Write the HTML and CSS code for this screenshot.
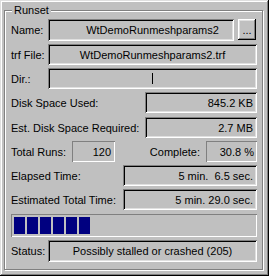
FILE: index.html
```html
<!DOCTYPE html>
<html>
<head>
<meta charset="utf-8">
<link rel="stylesheet" href="styles.css">
</head>
<body>
<div class="window">
  <div class="group">
    <div class="legend">Runset</div>
    <div class="rows">
      <div class="row h22">
        <span class="lbl w37">Name:</span>
        <div class="sunken center name">WtDemoRunmeshparams2</div>
        <div class="btn">...</div>
      </div>
      <div class="row">
        <span class="lbl w37">trf File:</span>
        <div class="sunken center">WtDemoRunmeshparams2.trf</div>
      </div>
      <div class="row">
        <span class="lbl w37">Dir.:</span>
        <div class="sunken center"><span class="caret"></span></div>
      </div>
      <div class="row">
        <span class="lbl w134">Disk Space Used:</span>
        <div class="sunken right">845.2 KB</div>
      </div>
      <div class="row mt1">
        <span class="lbl w134">Est. Disk Space Required:</span>
        <div class="sunken right">2.7 MB</div>
      </div>
      <div class="row">
        <span class="lbl w61">Total Runs:</span>
        <div class="static right runs">120</div>
        <span class="lbl complete">Complete:</span>
        <div class="static right pct">30.8 %</div>
      </div>
      <div class="row">
        <span class="lbl w112">Elapsed Time:</span>
        <div class="sunken right">5 min.  6.5 sec.</div>
      </div>
      <div class="row">
        <span class="lbl w112">Estimated Total Time:</span>
        <div class="sunken right">5 min. 29.0 sec.</div>
      </div>
      <div class="row h23 progress mt1">
        <span class="block"></span><span class="block"></span><span class="block"></span><span class="block"></span><span class="block"></span><span class="block"></span>
      </div>
      <div class="row h22">
        <span class="lbl w37">Status:</span>
        <div class="sunken center">Possibly stalled or crashed (205)</div>
      </div>
    </div>
  </div>
</div>
</body>
</html>
```
FILE: styles.css
```css
* { box-sizing: border-box; }
html, body { margin: 0; padding: 0; }
body {
  background: #c0c0c0;
  font-family: "Liberation Sans", Arial, sans-serif;
  font-size: 11px;
  color: #000;
}
.window {
  width: 269px;
  height: 276px;
  background: #c0c0c0;
  padding: 10px 0 0 4px;
  box-shadow: inset -1px -1px #000, inset 1px 1px #dfdfdf, inset -2px -2px #808080, inset 2px 2px #fff;
}
.group {
  position: relative;
  width: 259px;
  height: 260px;
  border: 1px solid #808080;
  box-shadow: inset 1px 1px #fff, 1px 1px #fff;
  padding: 8px 5px 0 6px;
}
.legend {
  position: absolute;
  left: 7px;
  top: -8px;
  padding: 0 2px;
  background: #c0c0c0;
  line-height: 14px;
  font-size: 11px;
}
.rows {
  display: flex;
  flex-direction: column;
  gap: 3px;
}
.row {
  display: flex;
  align-items: center;
  height: 21px;
}
.mt1 { margin-top: 1px; }
.h22 { height: 22px; }
.h23 { height: 23px; }
.lbl { flex: none; white-space: nowrap; }
.w37 { width: 37px; }
.w61 { width: 61px; }
.w112 { width: 112px; }
.w134 { width: 134px; }
.sunken, .static {
  height: 100%;
  display: flex;
  align-items: center;
  white-space: pre;
  background: #c0c0c0;
}
.sunken {
  flex: 1;
  box-shadow: inset 1px 1px #808080, inset -1px -1px #fff, inset 2px 2px #000, inset -2px -2px #dfdfdf;
}
.static {
  box-shadow: inset 1px 1px #808080, inset -1px -1px #fff;
}
.center { justify-content: center; }
.right { justify-content: flex-end; padding-right: 4px; }
.name { padding-left: 23px; }
.caret {
  width: 1px;
  height: 11px;
  background: #000;
}
.btn {
  flex: none;
  width: 18px;
  height: 21px;
  margin: -2px 1px 0 4px;
  display: flex;
  align-items: flex-end;
  justify-content: center;
  padding-bottom: 4px;
  box-shadow: inset -1px -1px #000, inset 1px 1px #fff, inset -2px -2px #808080, inset 2px 2px #dfdfdf;
}
.runs { width: 43px; }
.complete { flex: 1; text-align: right; padding-right: 6px; }
.pct { width: 51px; padding-right: 3px; }
.progress {
  gap: 2px;
  padding: 3px 3px;
  align-items: stretch;
  box-shadow: inset 1px 1px #808080, inset -1px -1px #fff;
}
.block {
  width: 11px;
  background: #000080;
}
```
